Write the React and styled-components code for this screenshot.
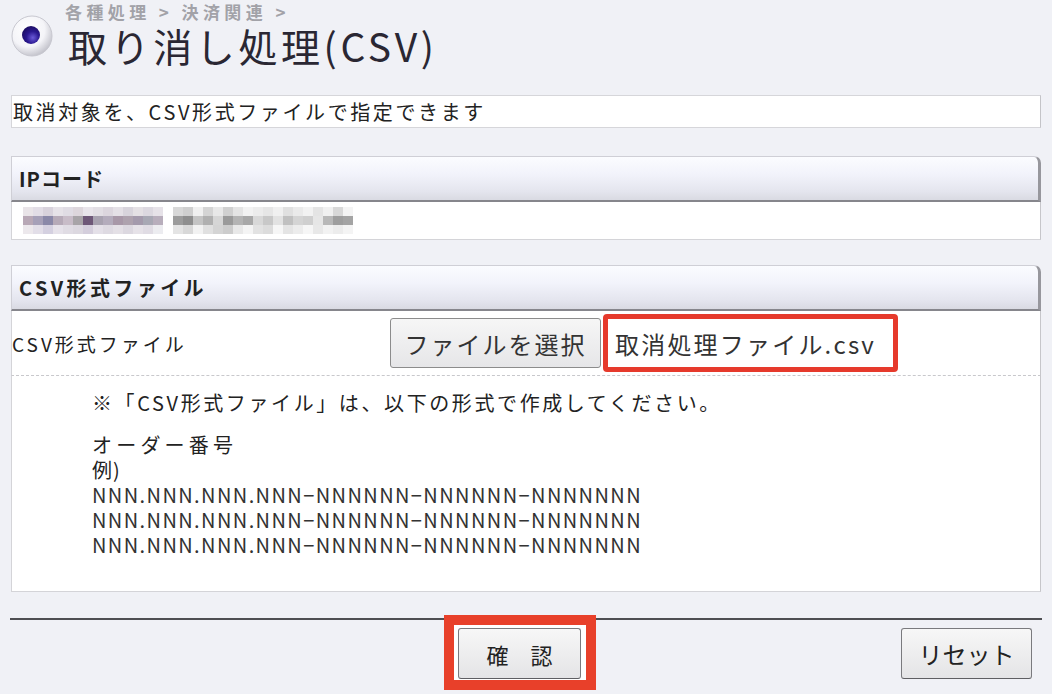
import React from "react";
import styled, { createGlobalStyle } from "styled-components";

const GlobalStyle = createGlobalStyle`
  html, body {
    margin: 0;
    padding: 0;
    background: #f0f1f6;
  }
  body {
    font-family: "Noto Sans CJK JP", "Noto Sans", sans-serif;
    color: #333;
  }
`;

const Page = styled.div`
  width: 1052px;
  height: 694px;
  overflow: hidden;
  box-sizing: border-box;
  padding: 2px 11px 0 11px;
`;

const TitleBlock = styled.div`
  display: flex;
  align-items: flex-start;
  gap: 12px;
`;

const RadioIcon = styled.svg`
  width: 42px;
  height: 42px;
  margin-top: 13px;
  flex-shrink: 0;
`;

const TitleText = styled.div`
  display: flex;
  flex-direction: column;
`;

const Crumb = styled.div`
  font-size: 17px;
  line-height: 20px;
  font-weight: bold;
  color: #a2a2a8;
  letter-spacing: 4.4px;
`;

const Title = styled.h1`
  margin: 1px 0 0 3px;
  font-size: 39px;
  line-height: 44px;
  font-weight: normal;
  color: #2a2733;
  letter-spacing: 3.6px;
`;

const Intro = styled.div`
  margin-top: 28px;
  background: #fff;
  border: 1px solid #d6d6da;
  border-right-color: #c4c4c8;
  font-size: 20px;
  line-height: 31px;
  padding-left: 1px;
  letter-spacing: 2.6px;
  color: #222;
`;

const Section = styled.section`
  margin-top: ${(p) => p.gap}px;
`;

const SectionHead = styled.div`
  height: 43px;
  display: flex;
  align-items: center;
  padding-left: 7px;
  font-size: 20px;
  font-weight: bold;
  letter-spacing: ${(p) => p.spacing}px;
  color: #222;
  background: linear-gradient(#fbfcff 0%, #f2f3fb 40%, #e4e5ee 80%, #d9dae2 100%);
  border: 1px solid #cfcfd6;
  border-bottom: 2px solid #86868c;
  border-right: 3px solid #97979d;
  border-top-right-radius: 7px;
`;

const ValueRow = styled.div`
  height: 37px;
  background: #fff;
  border: 1px solid #d4d4d8;
  border-top: none;
  border-right-color: #c6c6ca;
  display: flex;
  align-items: center;
  padding-left: 11px;
  gap: 10px;
`;

const Mosaic = styled.div`
  display: grid;
  grid-template-columns: repeat(${(p) => p.cols}, 10px);
  grid-auto-rows: 9px;
`;

const Cell = styled.span`
  display: block;
  background: ${(p) => p.shade};
`;

const FileRow = styled.div`
  height: 64px;
  display: flex;
  align-items: center;
  background: #fff;
  border-left: 1px solid #d4d4d8;
  border-right: 1px solid #c6c6ca;
  border-bottom: 1px dashed #c8c8cc;
`;

const FieldLabel = styled.div`
  width: 378px;
  font-size: 19px;
  letter-spacing: 3px;
  color: #222;
`;

const FileButton = styled.button`
  height: 50px;
  width: 211px;
  padding: 0;
  font-family: inherit;
  font-size: 24px;
  letter-spacing: 2px;
  color: #333;
  background: linear-gradient(#f6f6f6, #e6e6e8);
  border: 1px solid #8c8c8c;
  border-radius: 3px;
`;

const FileName = styled.div`
  margin-left: 2px;
  height: 48px;
  width: 278px;
  box-sizing: content-box;
  border: 5px solid #e63a2c;
  border-radius: 4px;
  display: flex;
  align-items: center;
  padding-left: 7px;
  font-size: 24px;
  letter-spacing: 2.2px;
  color: #333;
  background: #fff;
`;

const Notes = styled.div`
  height: 216px;
  box-sizing: border-box;
  background: #fff;
  border: 1px solid #d4d4d8;
  border-top: none;
  border-right-color: #c6c6ca;
  padding: 14px 0 0 80px;
  font-size: 20px;
  line-height: 25px;
  color: #222;
`;

const NoteLine = styled.div`
  letter-spacing: ${(p) => p.spacing}px;
  margin-bottom: ${(p) => p.after || 0}px;
`;

const Sample = styled.div`
  font-size: 20px;
  line-height: 25px;
  letter-spacing: 1.4px;
  color: #333;
`;

const Footer = styled.div`
  margin-top: 26px;
  margin-left: -1px;
  margin-right: -1px;
  border-top: 2px solid #4e4e52;
  display: flex;
  align-items: flex-start;
`;

const ConfirmWrap = styled.div`
  margin-top: -5px;
  margin-left: 434px;
  border: 10px solid #e8402a;
  background: #fff;
  padding: 3px 5px 1px 4px;
`;

const PlainButton = styled.button`
  height: 51px;
  width: ${(p) => p.w}px;
  padding: 0;
  font-family: inherit;
  font-size: ${(p) => p.size}px;
  color: #222;
  background: linear-gradient(#f7f7f7, #e4e4e6);
  border: 1px solid #7a7a7e;
  border-bottom-color: #5e5e62;
  border-radius: 3px;
`;

const ResetSlot = styled.div`
  margin-left: auto;
  margin-right: 10px;
  padding-top: 8px;
`;

const ipShades = [
  ["#e9e4e8", "#e2dde6", "#d8d2dc", "#e6e2e8", "#e0dce4", "#ddd6dc", "#e8e4ea", "#e2dee4", "#dcd6de", "#e4e0e6", "#d8d4dc", "#e4e0e4", "#dcd8e0", "#e6e2e8"],
  ["#b8a8b6", "#a6a0b8", "#8a88a8", "#b6aab8", "#c8bcc8", "#a8a4a8", "#6e5878", "#a8a2b0", "#b4acbc", "#a898a8", "#aea2ae", "#a49aac", "#a8a8b4", "#b8aebc"],
  ["#ece8ec", "#e2dee8", "#d4d0e0", "#e6e2ea", "#e0dce4", "#dcd8e0", "#d4cedc", "#e4e0e8", "#dedae2", "#e4e0e6", "#dcd8e0", "#e6e2e8", "#e0dce4", "#ececf0"],
];

const codeShades = [
  ["#d8d8d8", "#cfcfcf", "#f0f0f0", "#d4d4d4", "#e8e8e8", "#d0d0d0", "#e4e4e4", "#f2f2f2", "#ececec", "#e6e6e6", "#f0f0f0", "#e0e0e0", "#eaeaea", "#f2f2f2", "#e4e4e4", "#f0f0f0", "#d8d8d8", "#f4f4f4"],
  ["#9c9c9c", "#8e8e8e", "#c4c4c4", "#b0b0b0", "#d6d6d6", "#9a9a9a", "#b4b4b4", "#a8a8a8", "#d8d8d8", "#c8c8c8", "#e2e2e2", "#c0c0c0", "#d4d4d4", "#cfcfcf", "#e6e6e6", "#b8b8b8", "#9e9e9e", "#a4a4a4"],
  ["#e4e4e4", "#d8d8d8", "#f2f2f2", "#e0e0e0", "#d4d4d4", "#cccccc", "#e8e8e8", "#f4f4f4", "#e2e2e2", "#dcdcdc", "#f6f6f6", "#e4e4e4", "#ececec", "#f6f6f6", "#e8e8e8", "#f2f2f2", "#ececec", "#f4f4f4"],
];

function MosaicBlock({ rows }) {
  return (
    <Mosaic cols={rows[0].length}>
      {rows.flat().map((shade, i) => (
        <Cell key={i} shade={shade} />
      ))}
    </Mosaic>
  );
}

const sampleRow = "NNN.NNN.NNN.NNN\u2212NNNNNN\u2212NNNNNN\u2212NNNNNNN";

export default function App() {
  return (
    <>
      <GlobalStyle />
      <Page>
        <TitleBlock>
          <RadioIcon viewBox="0 0 42 42">
            <defs>
              <radialGradient id="ring" cx="0.4" cy="0.35" r="0.7">
                <stop offset="0" stopColor="#ffffff" />
                <stop offset="0.6" stopColor="#f4f4f8" />
                <stop offset="1" stopColor="#bdbdc6" />
              </radialGradient>
              <radialGradient id="dot" cx="0.6" cy="0.65" r="0.7">
                <stop offset="0" stopColor="#6b5ad8" />
                <stop offset="0.5" stopColor="#2a1890" />
                <stop offset="1" stopColor="#1a0c5c" />
              </radialGradient>
            </defs>
            <circle cx="21" cy="21" r="20" fill="url(#ring)" stroke="#c8c8d0" strokeWidth="1" />
            <circle cx="20" cy="20" r="9" fill="url(#dot)" />
          </RadioIcon>
          <TitleText>
            <Crumb>各種処理 &gt; 決済関連 &gt;</Crumb>
            <Title>取り消し処理(CSV)</Title>
          </TitleText>
        </TitleBlock>

        <Intro>取消対象を、CSV形式ファイルで指定できます</Intro>

        <Section gap={28}>
          <SectionHead spacing={1}>IPコード</SectionHead>
          <ValueRow>
            <MosaicBlock rows={ipShades} />
            <MosaicBlock rows={codeShades} />
          </ValueRow>
        </Section>

        <Section gap={25}>
          <SectionHead spacing={3.4}>CSV形式ファイル</SectionHead>
          <FileRow>
            <FieldLabel>CSV形式ファイル</FieldLabel>
            <FileButton>ファイルを選択</FileButton>
            <FileName>取消処理ファイル.csv</FileName>
          </FileRow>
          <Notes>
            <NoteLine spacing={2.6} after={17}>
              ※「CSV形式ファイル」は、以下の形式で作成してください。
            </NoteLine>
            <NoteLine spacing={4.2}>オーダー番号</NoteLine>
            <NoteLine spacing={1}>例)</NoteLine>
            <Sample>{sampleRow}</Sample>
            <Sample>{sampleRow}</Sample>
            <Sample>{sampleRow}</Sample>
          </Notes>
        </Section>

        <Footer>
          <ConfirmWrap>
            <PlainButton w={123} size={22}>
              確　認
            </PlainButton>
          </ConfirmWrap>
          <ResetSlot>
            <PlainButton w={131} size={24}>
              リセット
            </PlainButton>
          </ResetSlot>
        </Footer>
      </Page>
    </>
  );
}
